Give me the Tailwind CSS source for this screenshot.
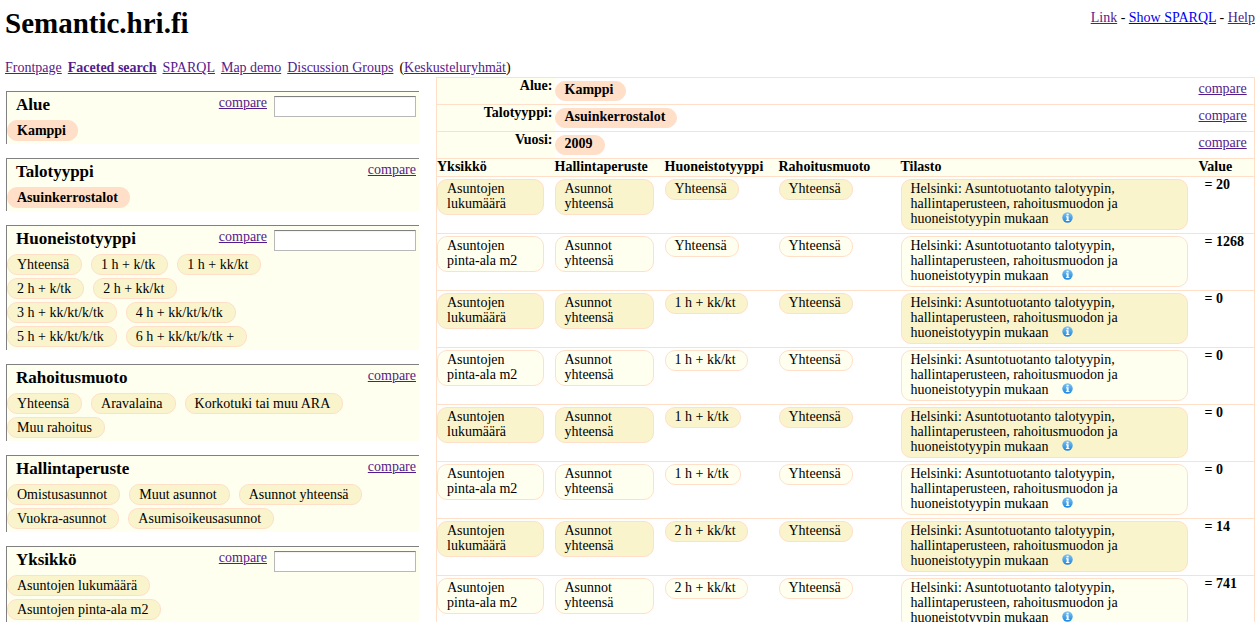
<!DOCTYPE html>
<html lang="fi">
<head>
<meta charset="utf-8">
<title>Semantic.hri.fi</title>
<script src="https://cdn.jsdelivr.net/npm/@tailwindcss/browser@4"></script>
</head>
<body class="h-screen overflow-hidden bg-white font-['Liberation_Serif','Times_New_Roman',serif] text-[14px] leading-[15px] text-black">
<header class="flex items-start justify-between pr-[2px] pl-[5px]">
  <h1 class="pt-[7px] text-[29px] leading-8 font-bold">Semantic.hri.fi</h1>
  <div class="pt-[10px]"><a href="#" class="text-[#551a8b] underline">Link</a> - <a href="#" class="text-[#0000ee] underline">Show SPARQL</a> - <a href="#" class="text-[#551a8b] underline">Help</a></div>
</header>
<nav class="mt-[21px] flex h-[17px] gap-[6px] pl-[5px]">
  <a href="#" class="text-[#551a8b] underline">Frontpage</a>
  <a href="#" class="font-bold text-[#551a8b] underline">Faceted search</a>
  <a href="#" class="text-[#551a8b] underline">SPARQL</a>
  <a href="#" class="text-[#551a8b] underline">Map demo</a>
  <a href="#" class="text-[#551a8b] underline">Discussion Groups</a>
  <span>(<a href="#" class="text-[#551a8b] underline">Keskusteluryhmät</a>)</span>
</nav>
<div class="flex items-start gap-[17px] pr-[2px] pl-[6px]">
  <aside id="facets" class="flex w-[413px] shrink-0 flex-col gap-[14px] pt-[14px]"></aside>
  <main class="min-w-0 grow">
    <table class="w-full table-fixed border-collapse border border-[#ffdfc8]">
      <colgroup><col class="w-[118px]"><col class="w-[110px]"><col class="w-[114px]"><col class="w-[122px]"><col><col class="w-[56px]"></colgroup>
      <tbody id="selected"></tbody>
      <tbody id="results">
        <tr class="h-[18px] border-t border-[#ffdfc8] bg-[#fffff0] text-left align-top">
          <th scope="col">Yksikkö</th><th scope="col">Hallintaperuste</th><th scope="col">Huoneistotyyppi</th><th scope="col">Rahoitusmuoto</th><th scope="col">Tilasto</th><th scope="col">Value</th>
        </tr>
      </tbody>
    </table>
  </main>
</div>
<svg class="absolute h-0 w-0" aria-hidden="true">
  <defs>
    <linearGradient id="blue" x1="0" y1="0" x2="0" y2="1"><stop offset="0" stop-color="#7cc4f2"/><stop offset="1" stop-color="#1c86e0"/></linearGradient>
    <symbol id="info" viewBox="0 0 11 11">
      <circle cx="5.5" cy="5.5" r="5.2" fill="url(#blue)"/>
      <path d="M4.6 1.8h2v1.6h-2zM4 4.3h2.6v3.6h.8v1H3.9v-1h.8V5.2H4z" fill="#fff"/>
    </symbol>
  </defs>
</svg>
<script>
const chosen = 'rounded-[10px] border border-[#ffdfc8] bg-[#ffdfc8] pr-[11px] pl-[9px] font-bold';
const option = 'rounded-[10px] border border-[#ffdfc8] bg-[#faf4cd] pr-[12px] pl-[9px]';
const facets = [
  ['Alue', true, chosen, [['Kamppi']]],
  ['Talotyyppi', false, chosen, [['Asuinkerrostalot']]],
  ['Huoneistotyyppi', true, option, [['Yhteensä', '1 h + k/tk', '1 h + kk/kt'], ['2 h + k/tk', '2 h + kk/kt'], ['3 h + kk/kt/k/tk', '4 h + kk/kt/k/tk'], ['5 h + kk/kt/k/tk', '6 h + kk/kt/k/tk +']]],
  ['Rahoitusmuoto', false, option, [['Yhteensä', 'Aravalaina', 'Korkotuki tai muu ARA'], ['Muu rahoitus']]],
  ['Hallintaperuste', false, option, [['Omistusasunnot', 'Muut asunnot', 'Asunnot yhteensä'], ['Vuokra-asunnot', 'Asumisoikeusasunnot']]],
  ['Yksikkö', true, option, [['Asuntojen lukumäärä'], ['Asuntojen pinta-ala m2']]],
];
document.getElementById('facets').innerHTML = facets.map(([name, search, style, rows]) => `
  <section class="border-t border-l border-[#808080] bg-[#fffff0] pb-[3px]">
    <div class="flex h-[28px] items-start pr-[3px] pl-[9px]">
      <h2 class="grow pt-[4px] text-[17px] leading-[18px] font-bold">${name}</h2>
      <a href="#" class="pt-[3px] text-[#551a8b] underline">compare</a>
      ${search ? `<input type="text" aria-label="${name}" class="mt-[4px] ml-[7px] h-[21px] w-[142px] border border-[#b8b8b8] border-t-[#808080] bg-white px-1 inset-shadow-xs">` : ''}
    </div>
    <div class="flex flex-col gap-[3px]">${rows.map(r => `<div class="flex gap-[9px]">${r.map(t => `<button class="py-[2px] ${style}">${t}</button>`).join('')}</div>`).join('')}</div>
  </section>`).join('');

document.getElementById('selected').innerHTML = [['Alue', 'Kamppi'], ['Talotyyppi', 'Asuinkerrostalot'], ['Vuosi', '2009']].map(([k, v]) => `
  <tr class="h-[27px] border-t border-[#ffdfc8] align-top">
    <th scope="row" class="bg-[#fffff0] pr-[2px] text-right">${k}:</th>
    <td colspan="4" class="pt-[3px]"><button class="block pb-[3px] ${chosen}">${v}</button></td>
    <td class="pt-[3px]"><a href="#" class="text-[#551a8b] underline">compare</a></td>
  </tr>`).join('');

const deep = 'block rounded-[10px] border border-[#ffdfc8] bg-[#faf4cd] pt-[1px] pr-[11px] pb-[3px] pl-[9px] text-left';
const pale = 'block rounded-[10px] border border-[#ffdfc8] bg-[#fffff0] pt-[1px] pr-[11px] pb-[3px] pl-[9px] text-left';
const types = ['Yhteensä', '1 h + kk/kt', '1 h + k/tk', '2 h + kk/kt'];
document.getElementById('results').insertAdjacentHTML('beforeend', [20, 1268, 0, 0, 0, 0, 14, 741].map((value, i) => {
  const chip = i % 2 ? pale : deep;
  return `
  <tr class="h-[57px] border-t border-[#ffdfc8] align-top">
    <td class="pt-[2px] pr-[11px]"><button class="w-full ${chip}">Asuntojen<br>${i % 2 ? 'pinta-ala m2' : 'lukumäärä'}</button></td>
    <td class="pt-[2px] pr-[11px]"><button class="w-full ${chip}">Asunnot<br>yhteensä</button></td>
    <td class="pt-[2px]"><button class="${chip}">${types[i >> 1]}</button></td>
    <td class="pt-[2px]"><button class="${chip}">Yhteensä</button></td>
    <td class="pt-[2px] pr-[11px]"><div class="${chip}">Helsinki: Asuntotuotanto talotyypin,<br>hallintaperusteen, rahoitusmuodon ja<br>huoneistotyypin mukaan <a href="#" aria-label="Info" class="ml-[10px] inline-block"><svg class="h-[11px] w-[11px]"><use href="#info"/></svg></a></div></td>
    <td class="pl-[6px] font-bold whitespace-nowrap">= ${value}</td>
  </tr>`;
}).join(''));
</script>
</body>
</html>
